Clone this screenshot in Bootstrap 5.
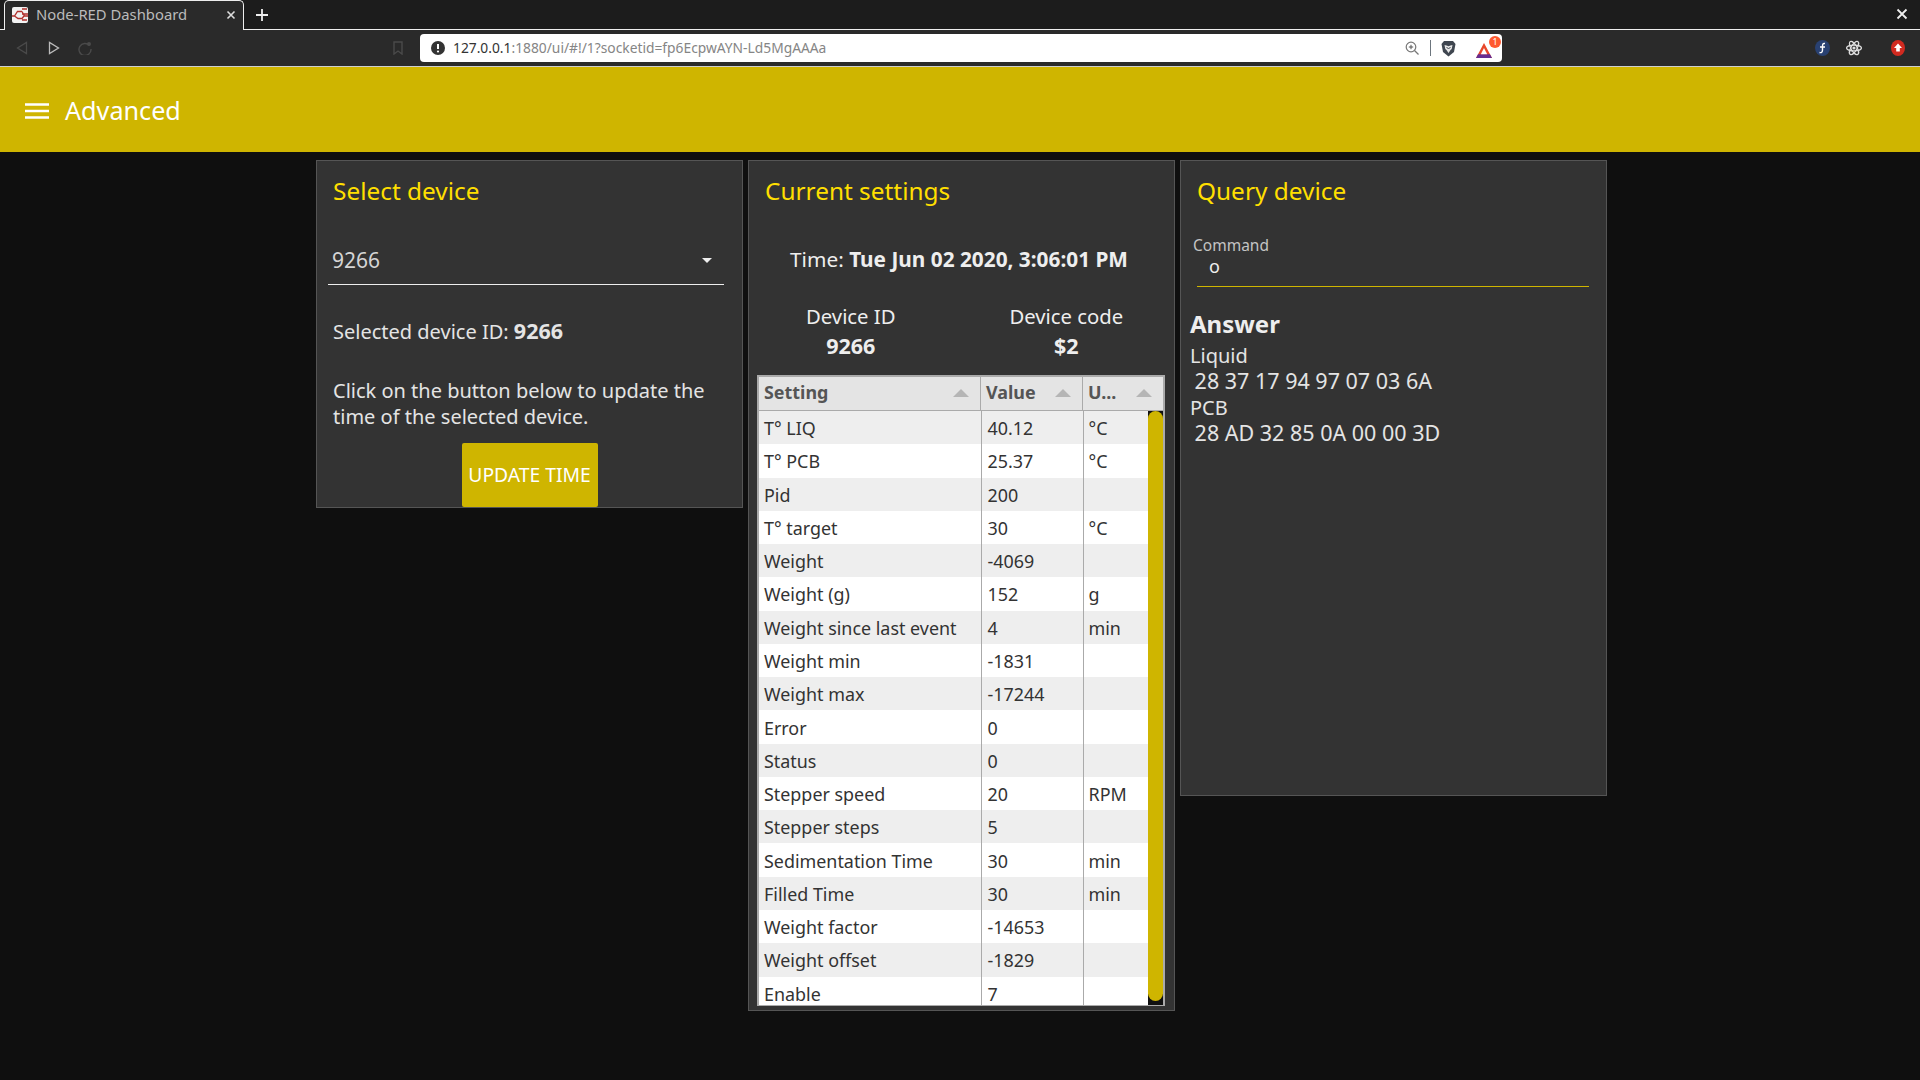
<!DOCTYPE html>
<html lang="en">
<head>
<meta charset="UTF-8">
<title>Node-RED Dashboard</title>
<link href="https://cdn.jsdelivr.net/npm/bootstrap@5.3.0/dist/css/bootstrap.min.css" rel="stylesheet">
<style>
    html, body { height: 100%; }
    body { background: #0f0f0f; font-family: "Noto Sans", "Open Sans", sans-serif; color: #eee; font-size: 20px; overflow: hidden; }

    /* browser chrome */
    .tab-strip { height: 30px; background: #1c1c1c; border-bottom: 1px solid #eee; padding-left: 4px; }
    .tab-item { width: 240px; height: 30px; background: #2a2a2a; border: 1px solid #eee; border-bottom: 0; border-radius: 5px 5px 0 0; padding: 0 7px 2px; color: #bbb; font-size: 14.8px; }
    .tool-strip { height: 37px; background: #2a2a2a; border-bottom: 1px solid #cfcfcf; padding-left: 16px; }
    .url-box { width: 1082px; height: 28px; background: #fff; border-radius: 4px; font-size: 13.8px; color: #858585; padding: 0 4px 0 11px; }
    .url-host { color: #333; }
    .note-dot { right: -3px; top: -2px; width: 12px; height: 12px; border-radius: 50%; background: #ff5a30; color: #fff; font-size: 9px; line-height: 12px; text-align: center; }

    /* dashboard */
    .app-bar { height: 85px; background: #cfb500; color: #fff; font-size: 25.2px; padding-left: 25px; padding-top: 2px; }
    .panel-row { padding: 8px 0 0 316px; gap: 5px; }
    .panel-box { width: 427px; background: #333; border: 1px solid #555; flex: none; }
    .panel-title { color: #ffdf00; font-size: 24.4px; line-height: 30px; margin: 0; padding: 15px 0 0 16px; }
    .panel-a { height: 348px; }
    .panel-b { height: 851px; }
    .panel-c { height: 636px; }

    .picker { margin: 31px 18px 0 11px; height: 48px; border-bottom: 1px solid #eee; padding: 0 12px 0 4px; color: #d5d5d5; font-size: 21px; }
    .picker-caret { width: 0; height: 0; border-left: 5.5px solid transparent; border-right: 5.5px solid transparent; border-top: 5px solid #eee; }
    .txt-block { padding-left: 16px; padding-right: 14px; line-height: 26px; color: #e4e4e4; }
    .big-num { font-size: 21.5px; line-height: 1; }
    .update-btn { width: 136px; height: 64px; padding: 0; background: #cfb500; border: 0; border-radius: 2px; color: #fff; font-size: 19.3px; }
    .update-btn:hover { background: #cfb500; color: #fff; }

    .time-line { margin-top: 40px; padding-right: 5px; line-height: 26px; font-size: 20.8px; }
    .id-row { margin-top: 29px; margin-left: -6px; line-height: 30px; font-size: 20.3px; }
    .id-row > div { width: 216px; }

    .data-grid { margin: 14px 9px 0 8px; border: 2px solid #aaa; border-bottom-width: 1px; height: 631px; overflow: hidden; background: #fff; font-size: 17.9px; color: #333; }
    .grid-head { display: grid; grid-template-columns: 222px 102px 1fr; height: 34px; background: #e4e4e4; border-bottom: 1px solid #aaa; font-weight: 700; color: #555; }
    .grid-head > div { padding: 0 11px 2px 5px; border-right: 1px solid #aaa; }
    .grid-head > div:last-child { border-right: 0; }
    .sort-mark { width: 0; height: 0; border-left: 8px solid transparent; border-right: 8px solid transparent; border-bottom: 8px solid #b5b5b5; }
    .grid-body { height: 595px; overflow: hidden; }
    .grid-rows { width: 391px; margin: 0; table-layout: fixed; --bs-table-bg: #fff; --bs-table-striped-bg: #eee; --bs-table-striped-color: #333; --bs-table-color: #333; }
    .grid-rows td { height: 33.28px; padding: 2px 0 0 5px; border: 0; border-right: 1px solid #aaa; line-height: 31px; white-space: nowrap; vertical-align: middle; }
    .grid-rows td:nth-child(2) { padding-left: 6px; }
    .grid-rows td:last-child { border-right: 0; }
    .scroll-track { width: 15px; background: #111; flex: none; padding-bottom: 5px; }
    .scroll-thumb { background: #cfb500; height: 100%; border-radius: 8px; }

    .cmd-wrap { margin: 29px 17px 0 16px; }
    .cmd-label { font-size: 15.5px; color: #c4c4c4; line-height: 20px; margin-left: -4px; }
    .cmd-val { border-bottom: 1px solid #cfb500; height: 32px; line-height: 22px; padding-left: 12px; font-size: 18px; }
    .answer-box { padding: 22px 10px 0 9px; line-height: 26px; color: #e4e4e4; }
    .answer-box h4 { font-size: 24px; font-weight: 700; margin: 0 0 4px; line-height: 30px; color: #eee; }
    .hex-line { font-size: 21.5px; line-height: 1; margin-left: -1px; }
</style>
</head>
<body>
    <!-- browser window bars -->
    <div class="tab-strip d-flex align-items-start">
        <div class="tab-item d-flex align-items-center">
            <svg width="16" height="16" viewBox="0 0 16 16" class="me-2 flex-shrink-0"><rect width="16" height="16" rx="2" fill="#f2f2f2"/><path d="M0 9h2.5l3-4.5h4.5M2.5 9l3.5 2.5h4l2-2.500h4M10 2h5M10 7h6M10 13h5M10 4.5l2.5 4.5" fill="none" stroke="#b0302c" stroke-width="1.3"/></svg>
            <span class="flex-grow-1">Node-RED Dashboard</span>
            <svg width="10" height="10" viewBox="0 0 10 10"><path d="M1.5 1.5l7 7M8.5 1.5l-7 7" stroke="#ddd" stroke-width="1.6"/></svg>
        </div>
        <svg class="mt-2" width="14" height="14" viewBox="0 0 14 14" style="margin-left:11px"><path d="M7 1v12M1 7h12" stroke="#eee" stroke-width="1.8"/></svg>
        <svg class="ms-auto mt-2" width="12" height="12" viewBox="0 0 12 12" style="margin-right:12px"><path d="M1.5 1.5l9 9M10.5 1.5l-9 9" stroke="#eee" stroke-width="1.8"/></svg>
    </div>
    <div class="tool-strip d-flex align-items-center">
        <svg width="12" height="14" viewBox="0 0 12 14"><path d="M10.5 1.5v11L1.5 7z" fill="none" stroke="#4a4a4a" stroke-width="1.3"/></svg>
        <svg width="12" height="14" viewBox="0 0 12 14" style="margin-left:20px"><path d="M1.5 1.5v11L10.5 7z" fill="none" stroke="#bbb" stroke-width="1.3"/></svg>
        <svg width="14" height="14" viewBox="0 0 14 14" style="margin-left:18px"><path d="M11.5 4.5A6 6 0 1 0 13 8" fill="none" stroke="#4a4a4a" stroke-width="1.4"/><circle cx="11" cy="3" r="2" fill="#4a4a4a"/></svg>
        <svg width="10" height="14" viewBox="0 0 10 14" style="margin-left:301px"><path d="M1 1h8v12L5 10l-4 3z" fill="none" stroke="#4a4a4a" stroke-width="1.4"/></svg>
        <div class="url-box d-flex align-items-center" style="margin-left:17px">
            <svg width="14" height="14" viewBox="0 0 14 14" class="me-2 flex-shrink-0"><circle cx="7" cy="7" r="7" fill="#333"/><path d="M7 3v5" stroke="#fff" stroke-width="2"/><circle cx="7" cy="10.5" r="1.1" fill="#fff"/></svg>
            <span class="flex-grow-1"><span class="url-host">127.0.0.1</span>:1880/ui/#!/1?socketid=fp6EcpwAYN-Ld5MgAAAa</span>
            <svg width="14" height="14" viewBox="0 0 14 14"><circle cx="6" cy="6" r="4.8" fill="none" stroke="#777" stroke-width="1.2"/><path d="M9.5 9.5L13.5 13.5" stroke="#777" stroke-width="1.3"/><path d="M6 3.8v4.4M3.8 6h4.4" stroke="#555"/></svg>
            <span class="border-start border-secondary" style="height:16px;margin:0 10px 0 11px"></span>
            <svg width="15" height="17" viewBox="0 0 15 17"><path d="M3 1h9l2.5 3-1.5 8-5.5 4.5L2 12 .5 4z" fill="#3f4650"/><path d="M3.5 5l2 .5 2 .8 2-.8 2-.5-.8 4-1.200 1-2 3-2-3-1.200-1z" fill="#e8e8e8"/><path d="M5.500 7.500l2 1 2-1" fill="none" stroke="#3f4650"/></svg>
            <span class="position-relative" style="width:22px;height:20px;margin-left:20px">
                <svg width="16" height="15" viewBox="0 0 16 15" class="position-absolute start-0 bottom-0"><path d="M8 0L16 15H0z" fill="#e8472b"/><path d="M0 15l2-3.800h12l2 3.800z" fill="#662d91"/><path d="M8 5l3.200 6.200H4.800z" fill="#fff"/></svg>
                <span class="note-dot position-absolute">1</span>
            </span>
        </div>
        <svg class="ms-auto" width="15" height="16" viewBox="0 0 15 16"><ellipse cx="7.5" cy="8" rx="7.5" ry="8" fill="#294172"/><path d="M10 3.5C7.5 3 7.5 5 7.5 7v3c0 2-1 3-3 2.5M5 7h5" fill="none" stroke="#fff" stroke-width="1.4"/></svg>
        <svg width="16" height="16" viewBox="0 0 14 14" style="margin-left:16px"><g fill="none" stroke="#ddd" stroke-width="1.1"><ellipse cx="7" cy="7" rx="6.5" ry="2.6"/><ellipse cx="7" cy="7" rx="6.5" ry="2.6" transform="rotate(60 7 7)"/><ellipse cx="7" cy="7" rx="6.5" ry="2.6" transform="rotate(120 7 7)"/></g><circle cx="7" cy="7" r="1.4" fill="#ddd"/></svg>
        <svg width="14" height="16" viewBox="0 0 14 16" style="margin-left:29px;margin-right:15px"><ellipse cx="7" cy="8" rx="7" ry="8" fill="#d12a20"/><path d="M7 3.5L11 8H8.8v3.5H5.2V8H3z" fill="#fff"/></svg>
    </div>

    <div class="app-bar d-flex align-items-center">
        <svg width="24" height="16" viewBox="0 0 24 16" class="me-3 flex-shrink-0"><path d="M0 1.5h24M0 8h24M0 14.5h24" stroke="#fff" stroke-width="2.4"/></svg>
        <span>Advanced</span>
    </div>

    <div class="panel-row d-flex align-items-start">
        <div class="panel-box panel-a">
            <h3 class="panel-title fw-normal">Select device</h3>
            <div class="picker d-flex align-items-center justify-content-between">
                <span>9266</span><span class="picker-caret"></span>
            </div>
            <div class="txt-block" style="margin-top:34px">Selected device ID: <b class="big-num">9266</b></div>
            <div class="txt-block" style="margin-top:33px">Click on the button below to update the time of the selected device.</div>
            <div class="d-flex justify-content-center" style="margin-top:13px">
                <button type="button" class="btn update-btn">UPDATE TIME</button>
            </div>
        </div>

        <div class="panel-box panel-b">
            <h3 class="panel-title fw-normal">Current settings</h3>
            <div class="time-line text-center">Time: <b>Tue Jun 02 2020, 3:06:01 PM</b></div>
            <div class="id-row d-flex text-center">
                <div>Device ID<br><b class="big-num">9266</b></div>
                <div>Device code<br><b class="big-num">$2</b></div>
            </div>
            <div class="data-grid">
                <div class="grid-head">
                    <div class="d-flex align-items-center justify-content-between"><span>Setting</span><span class="sort-mark"></span></div>
                    <div class="d-flex align-items-center justify-content-between"><span>Value</span><span class="sort-mark"></span></div>
                    <div class="d-flex align-items-center justify-content-between"><span>U...</span><span class="sort-mark"></span></div>
                </div>
                <div class="grid-body d-flex">
                    <table class="table table-striped grid-rows">
                        <colgroup><col style="width:222px"><col style="width:102px"><col></colgroup>
                        <tbody id="rows"></tbody>
                    </table>
                    <div class="scroll-track"><div class="scroll-thumb"></div></div>
                </div>
            </div>
        </div>

        <div class="panel-box panel-c">
            <h3 class="panel-title fw-normal">Query device</h3>
            <div class="cmd-wrap">
                <div class="cmd-label">Command</div>
                <div class="cmd-val">o</div>
            </div>
            <div class="answer-box">
                <h4>Answer</h4>
                Liquid<br><span class="hex-line">&nbsp;28 37 17 94 97 07 03 6A</span><br>PCB<br><span class="hex-line">&nbsp;28 AD 32 85 0A 00 00 3D</span>
            </div>
        </div>
    </div>

    <script src="https://cdn.jsdelivr.net/npm/bootstrap@5.3.0/dist/js/bootstrap.bundle.min.js"></script>
    <script>
        // settings table content
        const rows = [
            ['T° LIQ', '40.12', '°C'], ['T° PCB', '25.37', '°C'], ['Pid', '200', ''], ['T° target', '30', '°C'],
            ['Weight', '-4069', ''], ['Weight (g)', '152', 'g'], ['Weight since last event', '4', 'min'],
            ['Weight min', '-1831', ''], ['Weight max', '-17244', ''], ['Error', '0', ''], ['Status', '0', ''],
            ['Stepper speed', '20', 'RPM'], ['Stepper steps', '5', ''], ['Sedimentation Time', '30', 'min'],
            ['Filled Time', '30', 'min'], ['Weight factor', '-14653', ''], ['Weight offset', '-1829', ''], ['Enable', '7', '']
        ];
        document.getElementById('rows').innerHTML = rows.map(r => `<tr><td>${r[0]}</td><td>${r[1]}</td><td>${r[2]}</td></tr>`).join('');
    </script>
</body>
</html>
